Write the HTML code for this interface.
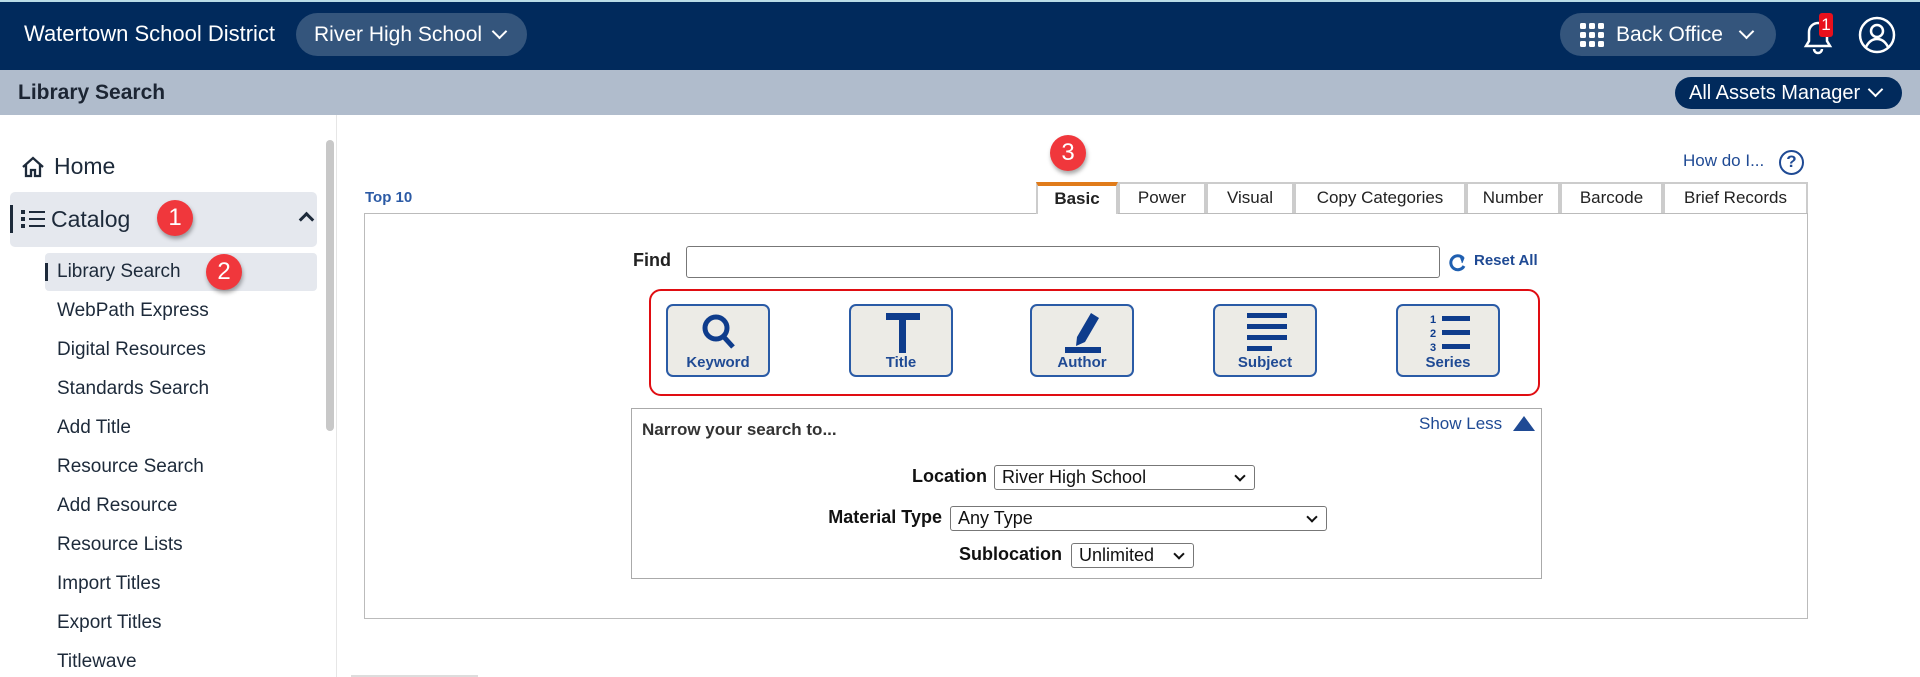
<!DOCTYPE html>
<html><head><meta charset="utf-8"><style>
*{box-sizing:border-box;margin:0;padding:0}
body{width:1920px;height:677px;overflow:hidden;background:#fff;font-family:"Liberation Sans",Arial,sans-serif;position:relative;color:#222}
.a{position:absolute}
.hdr{left:0;top:0;width:1920px;height:70px;background:#012a5c;border-top:2px solid #b9dbe6}
.sub{left:0;top:70px;width:1920px;height:45px;background:#b0bccc}
.pill{background:#34557c;border-radius:22px;color:#fff;font-size:21px;display:flex;align-items:center}
.chev{display:inline-block;width:11px;height:11px;border-right:2.5px solid #fff;border-bottom:2.5px solid #fff;transform:rotate(45deg);margin-left:12px;margin-top:-6px}
.nav{left:57px;font-size:19px;color:#1d2a3a}
.badge{width:36px;height:36px;border-radius:50%;background:#f0373c;color:#fff;font-size:24px;text-align:center;line-height:36px;box-shadow:1px 3px 4px rgba(0,0,0,.35)}
.tab{top:182px;height:31px;border:2px solid #ccc;border-bottom:none;font-size:17px;text-align:center;line-height:28px;color:#222;background:#fff}
.btn{top:304px;width:104px;height:73px;border:2px solid #2a5ba6;border-radius:7px;background:#ecebe6;text-align:center}
.btn span{position:absolute;left:0;right:0;bottom:4px;font-size:15px;font-weight:bold;color:#1f4a94}
.btn svg{position:absolute;left:32px;top:7px}
.lbl{font-size:18px;font-weight:bold;color:#111;text-align:right}
.sel{border:1px solid #777;border-radius:3px;font-size:18px;padding-left:7px;line-height:23px;color:#111;background:#fff}
.sel:after{content:"";position:absolute;right:10px;top:6px;width:6px;height:6px;border-right:2px solid #111;border-bottom:2px solid #111;transform:rotate(45deg)}
</style></head><body>
<div class="a hdr"></div>
<div class="a" style="left:24px;top:21px;color:#fff;font-size:22px">Watertown School District</div>
<div class="a pill" style="left:296px;top:13px;width:231px;height:43px;padding-left:18px">River High School<i class="chev"></i></div>
<div class="a pill" style="left:1560px;top:13px;width:216px;height:43px;padding-left:20px">
<svg width="24" height="24" viewBox="0 0 24 24" fill="#fff"><rect x="0" y="0" width="6" height="6" rx="1.5"/><rect x="9" y="0" width="6" height="6" rx="1.5"/><rect x="18" y="0" width="6" height="6" rx="1.5"/><rect x="0" y="9" width="6" height="6" rx="1.5"/><rect x="9" y="9" width="6" height="6" rx="1.5"/><rect x="18" y="9" width="6" height="6" rx="1.5"/><rect x="0" y="18" width="6" height="6" rx="1.5"/><rect x="9" y="18" width="6" height="6" rx="1.5"/><rect x="18" y="18" width="6" height="6" rx="1.5"/></svg>
<span style="margin-left:12px">Back Office</span><i class="chev" style="margin-left:18px"></i></div>
<svg class="a" style="left:1800px;top:16px" width="36" height="40" viewBox="0 0 36 40" fill="none" stroke="#fff" stroke-width="2.5"><path d="M6 30h24l-3-5V16a9 9 0 0 0-18 0v9z"/><path d="M14 33a4 4 0 0 0 8 0"/></svg>
<div class="a" style="left:1819px;top:13px;width:14px;height:24px;background:#e8101c;border-radius:3px;color:#fff;font-size:17px;text-align:center;line-height:24px">1</div>
<svg class="a" style="left:1858px;top:16px" width="38" height="38" viewBox="0 0 38 38" fill="none" stroke="#fff" stroke-width="2.5"><circle cx="19" cy="19" r="17"/><circle cx="19" cy="15" r="6"/><path d="M8 31c3-6 7-8 11-8s8 2 11 8"/></svg>
<div class="a sub"></div>
<div class="a" style="left:18px;top:81px;font-size:21px;font-weight:bold;color:#1c2533">Library Search</div>
<div class="a" style="left:1675px;top:77px;width:227px;height:32px;border-radius:16px;background:#012a5c;color:#fff;font-size:20px;line-height:32px;padding-left:14px">All Assets Manager<i class="chev" style="margin-left:10px;margin-top:0;vertical-align:4px"></i></div>
<!-- sidebar -->
<div class="a" style="left:336px;top:115px;width:1px;height:562px;background:#e6e6e6"></div>
<div class="a" style="left:326px;top:140px;width:8px;height:291px;background:#c8c8c8;border-radius:4px"></div>
<svg class="a" style="left:21px;top:155px" width="24" height="24" viewBox="0 0 24 24" fill="none" stroke="#1d2a3a" stroke-width="2.3"><path d="M2 12L12 3l10 9M5 10v11h5v-6h4v6h5V10"/></svg>
<div class="a" style="left:54px;top:153px;font-size:23px;color:#1d2a3a">Home</div>
<div class="a" style="left:10px;top:192px;width:307px;height:55px;background:#e5e8ee;border-radius:5px"></div>
<div class="a" style="left:10px;top:205px;width:3px;height:28px;background:#1d2a3a"></div>
<svg class="a" style="left:21px;top:209px" width="24" height="20" viewBox="0 0 24 20" fill="#1d2a3a"><rect x="0" y="1" width="4" height="4"/><rect x="0" y="8" width="4" height="4"/><rect x="0" y="15" width="4" height="4"/><rect x="8" y="2" width="16" height="2"/><rect x="8" y="9" width="16" height="2"/><rect x="8" y="16" width="16" height="2"/></svg>
<div class="a" style="left:51px;top:206px;font-size:23px;color:#1d2a3a">Catalog</div>
<div class="a" style="left:301px;top:214px;width:11px;height:11px;border-left:3px solid #1d2a3a;border-top:3px solid #1d2a3a;transform:rotate(45deg)"></div>
<div class="a badge" style="left:157px;top:200px">1</div>
<div class="a" style="left:45px;top:253px;width:272px;height:38px;background:#e5e8ee;border-radius:4px"></div>
<div class="a" style="left:45px;top:263px;width:3px;height:18px;background:#1d2a3a"></div>
<div class="a nav" style="top:261px">Library Search</div>
<div class="a badge" style="left:206px;top:254px">2</div>
<div class="a nav" style="top:300px">WebPath Express</div>
<div class="a nav" style="top:339px">Digital Resources</div>
<div class="a nav" style="top:378px">Standards Search</div>
<div class="a nav" style="top:417px">Add Title</div>
<div class="a nav" style="top:456px">Resource Search</div>
<div class="a nav" style="top:495px">Add Resource</div>
<div class="a nav" style="top:534px">Resource Lists</div>
<div class="a nav" style="top:573px">Import Titles</div>
<div class="a nav" style="top:612px">Export Titles</div>
<div class="a nav" style="top:651px">Titlewave</div>
<!-- content -->
<div class="a" style="left:365px;top:189px;font-size:15px;font-weight:bold;color:#2b5aa5">Top 10</div>
<div class="a" style="left:1683px;top:151px;font-size:17px;color:#1f4a94;white-space:nowrap">How do I...</div>
<div class="a" style="left:1779px;top:150px;width:25px;height:25px;border:2.5px solid #1f4a94;border-radius:50%;color:#1f4a94;font-weight:bold;font-size:17px;text-align:center;line-height:20px">?</div>
<div class="a" style="left:364px;top:213px;width:1444px;height:406px;border:1px solid #bbb"></div>
<div class="a tab" style="left:1036px;width:82px;border-top:4px solid #e07b1a;font-weight:bold;height:32px;line-height:25px">Basic</div>
<div class="a tab" style="left:1118px;width:88px">Power</div>
<div class="a tab" style="left:1206px;width:88px">Visual</div>
<div class="a tab" style="left:1294px;width:172px">Copy Categories</div>
<div class="a tab" style="left:1466px;width:94px">Number</div>
<div class="a tab" style="left:1560px;width:103px">Barcode</div>
<div class="a tab" style="left:1663px;width:145px">Brief Records</div>
<div class="a badge" style="left:1050px;top:135px">3</div>
<div class="a" style="left:633px;top:250px;font-size:18px;font-weight:bold;color:#222">Find</div>
<div class="a" style="left:686px;top:246px;width:754px;height:32px;border:1px solid #777;border-radius:3px"></div>
<svg class="a" style="left:1449px;top:252px" width="18" height="20" viewBox="0 0 18 20" fill="none" stroke="#1f5fb0" stroke-width="3"><path d="M14 6a7 7 0 1 0 1 8"/><path d="M10 3l5 3-2 5" fill="#1f5fb0" stroke-width="1"/></svg>
<div class="a" style="left:1474px;top:252px;font-size:15px;font-weight:bold;color:#1f4a94">Reset All</div>
<div class="a" style="left:649px;top:289px;width:891px;height:107px;border:2.5px solid #e00d12;border-radius:12px"></div>
<div class="a btn" style="left:666px"><svg width="40" height="40" viewBox="0 0 40 40" fill="none" stroke="#0e3c8c" stroke-width="5"><circle cx="16" cy="15" r="11"/><path d="M23 23l10 11"/></svg><span>Keyword</span></div>
<div class="a btn" style="left:849px"><svg width="40" height="40" viewBox="0 0 40 40" fill="#0e3c8c"><rect x="3" y="0" width="34" height="7"/><rect x="16" y="0" width="7" height="40"/></svg><span>Title</span></div>
<div class="a btn" style="left:1030px"><svg width="40" height="40" viewBox="0 0 40 40" fill="#0e3c8c"><path d="M27 0l8 5-14 24-9 4 1-9z"/><rect x="1" y="34" width="36" height="6"/></svg><span>Author</span></div>
<div class="a btn" style="left:1213px"><svg width="40" height="40" viewBox="0 0 40 40" fill="#0e3c8c"><rect x="0" y="0" width="40" height="5"/><rect x="0" y="11" width="40" height="5"/><rect x="0" y="22" width="40" height="5"/><rect x="0" y="33" width="25" height="5"/></svg><span>Subject</span></div>
<div class="a btn" style="left:1396px"><svg width="40" height="40" viewBox="0 0 40 40" fill="#0e3c8c"><rect x="12" y="3" width="28" height="5"/><rect x="12" y="17" width="28" height="5"/><rect x="12" y="31" width="28" height="5"/><text x="0" y="10" font-size="11" font-weight="bold" font-family="Liberation Sans">1</text><text x="0" y="24" font-size="11" font-weight="bold" font-family="Liberation Sans">2</text><text x="0" y="38" font-size="11" font-weight="bold" font-family="Liberation Sans">3</text></svg><span>Series</span></div>
<div class="a" style="left:631px;top:408px;width:911px;height:171px;border:1px solid #aaa"></div>
<div class="a" style="left:642px;top:420px;font-size:17px;font-weight:bold;color:#333">Narrow your search to...</div>
<div class="a" style="left:1419px;top:414px;font-size:17px;color:#1f4a94">Show Less</div>
<div class="a" style="left:1513px;top:416px;width:0;height:0;border-left:11px solid transparent;border-right:11px solid transparent;border-bottom:15px solid #1f4a94"></div>
<div class="a lbl" style="left:860px;width:127px;top:466px">Location</div>
<div class="a sel" style="left:994px;top:465px;width:261px;height:25px">River High School</div>
<div class="a lbl" style="left:760px;width:182px;top:507px">Material Type</div>
<div class="a sel" style="left:950px;top:506px;width:377px;height:25px">Any Type</div>
<div class="a lbl" style="left:880px;width:182px;top:544px">Sublocation</div>
<div class="a sel" style="left:1071px;top:543px;width:123px;height:25px">Unlimited</div>
<div class="a" style="left:351px;top:675px;width:127px;height:2px;background:#ddd"></div>
</body></html>
